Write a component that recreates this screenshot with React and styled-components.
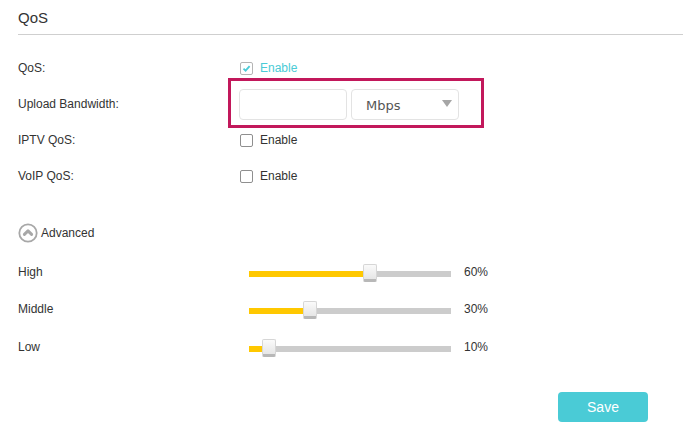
import React from 'react';
import styled, { createGlobalStyle } from 'styled-components';

const GlobalStyle = createGlobalStyle`
  html, body {
    margin: 0;
    padding: 0;
    background: #fff;
  }
  body {
    font-family: "Liberation Sans", Arial, sans-serif;
    color: #333;
  }
`;

const basicRows = [
  { label: 'QoS:', checked: true },
  { label: 'Upload Bandwidth:', bandwidth: true },
  { label: 'IPTV QoS:', checked: false },
  { label: 'VoIP QoS:', checked: false },
];

const priorities = [
  { label: 'High', value: 60 },
  { label: 'Middle', value: 30 },
  { label: 'Low', value: 10 },
];

const Page = styled.div`
  width: 687px;
  height: 441px;
  padding: 0 4px 0 18px;
  box-sizing: border-box;
  overflow: hidden;
`;

const Header = styled.div`
  height: 35px;
  border-bottom: 1px solid #cfcfcf;
  display: flex;
  align-items: center;
  padding-top: 1px;
  box-sizing: border-box;
  font-size: 15px;
  color: #333;
`;

const Form = styled.div`
  margin-top: 15px;
  display: flex;
  flex-direction: column;
`;

const Row = styled.div`
  display: flex;
  align-items: center;
  height: 36px;
`;

const Label = styled.div`
  width: ${(p) => p.width || 222}px;
  flex-shrink: 0;
  font-size: 12px;
  color: #333;
`;

const CheckWrap = styled.label`
  display: flex;
  align-items: center;
  gap: 7px;
  font-size: 12px;
  color: ${(p) => (p.checked ? '#4acbd6' : '#333')};
`;

const Box = styled.span`
  width: 11px;
  height: 11px;
  border: 1px solid ${(p) => (p.checked ? '#b5b5b5' : '#8f8f8f')};
  border-radius: 2px;
  display: flex;
  align-items: center;
  justify-content: center;
  background: #fff;
`;

const Bandwidth = styled.div`
  position: relative;
  display: flex;
  gap: 4px;
  margin-left: -1px;

  &::after {
    content: '';
    position: absolute;
    left: -11px;
    top: -11px;
    right: -25px;
    bottom: -8px;
    border: 3px solid #c2185b;
    pointer-events: none;
  }
`;

const TextInput = styled.input`
  width: 108px;
  height: 31px;
  box-sizing: border-box;
  border: 1px solid #e3e3e3;
  border-radius: 4px;
  outline: none;
  padding: 0 8px;
  font-size: 13px;
`;

const Select = styled.div`
  width: 108px;
  height: 31px;
  box-sizing: border-box;
  border: 1px solid #e3e3e3;
  border-radius: 4px;
  display: flex;
  align-items: center;
  justify-content: space-between;
  padding: 2px 6px 0 14px;
  font-family: "DejaVu Sans", Verdana, sans-serif;
  font-size: 13px;
  color: #555;
`;

const Arrow = styled.span`
  width: 0;
  height: 0;
  border-left: 5px solid transparent;
  border-right: 5px solid transparent;
  border-top: 7px solid #a6a6a6;
  margin-top: -3px;
`;

const Advanced = styled.div`
  display: flex;
  align-items: center;
  gap: 3px;
  height: 36px;
  margin-top: 21px;
  font-size: 12px;
  color: #333;
`;

const Sliders = styled.div`
  margin-top: 2px;
`;

const SliderRow = styled.div`
  display: flex;
  align-items: center;
  height: 37.5px;
`;

const Track = styled.div`
  position: relative;
  width: 202px;
  height: 6px;
  margin-top: 4px;
  background: #cccccc;
`;

const Fill = styled.div`
  position: absolute;
  left: 0;
  top: 0;
  bottom: 0;
  background: #ffc800;
`;

const Thumb = styled.div`
  position: absolute;
  top: -7px;
  width: 14px;
  height: 18px;
  margin-left: -7px;
  box-sizing: border-box;
  border: 1px solid #d6d6d6;
  border-bottom: 3px solid #b8b8b8;
  border-radius: 2px;
  background: linear-gradient(#fafafa, #e6e6e6);
`;

const Percent = styled.div`
  margin-left: 13px;
  font-size: 12px;
  color: #333;
`;

const Footer = styled.div`
  display: flex;
  justify-content: flex-end;
  padding-right: 35px;
  margin-top: 26px;
`;

const SaveButton = styled.button`
  width: 90px;
  height: 30px;
  border: none;
  border-radius: 4px;
  background: #4acbd6;
  color: #fff;
  font-family: "Liberation Sans", Arial, sans-serif;
  font-size: 14px;
  cursor: pointer;
`;

const Checkbox = ({ checked }) => (
  <CheckWrap checked={checked}>
    <Box checked={checked}>
      {checked && (
        <svg width="9" height="9" viewBox="0 0 9 9">
          <path d="M1.5 4.6 L3.6 6.6 L7.6 2.2" fill="none" stroke="#4acbd6" strokeWidth="1.8" />
        </svg>
      )}
    </Box>
    Enable
  </CheckWrap>
);

const AdvancedIcon = () => (
  <svg width="20" height="20" viewBox="0 0 20 20">
    <circle cx="10" cy="10" r="8.7" fill="none" stroke="#a8a8a8" strokeWidth="1.8" />
    <path d="M6.4 11.4 L10 7.9 L13.6 11.4" fill="none" stroke="#a8a8a8" strokeWidth="3" strokeLinecap="round" strokeLinejoin="round" />
  </svg>
);

const App = () => {
  return (
    <Page>
      <GlobalStyle />
      <Header>QoS</Header>
      <Form>
        {basicRows.map((row) => (
          <Row key={row.label}>
            <Label>{row.label}</Label>
            {row.bandwidth ? (
              <Bandwidth>
                <TextInput type="text" />
                <Select>
                  Mbps
                  <Arrow />
                </Select>
              </Bandwidth>
            ) : (
              <Checkbox checked={row.checked} />
            )}
          </Row>
        ))}
      </Form>
      <Advanced>
        <AdvancedIcon />
        Advanced
      </Advanced>
      <Sliders>
        {priorities.map((p) => (
          <SliderRow key={p.label}>
            <Label width={231}>{p.label}</Label>
            <Track>
              <Fill style={{ width: `${p.value}%` }} />
              <Thumb style={{ left: `${p.value}%` }} />
            </Track>
            <Percent>{p.value}%</Percent>
          </SliderRow>
        ))}
      </Sliders>
      <Footer>
        <SaveButton>Save</SaveButton>
      </Footer>
    </Page>
  );
};

export default App;
